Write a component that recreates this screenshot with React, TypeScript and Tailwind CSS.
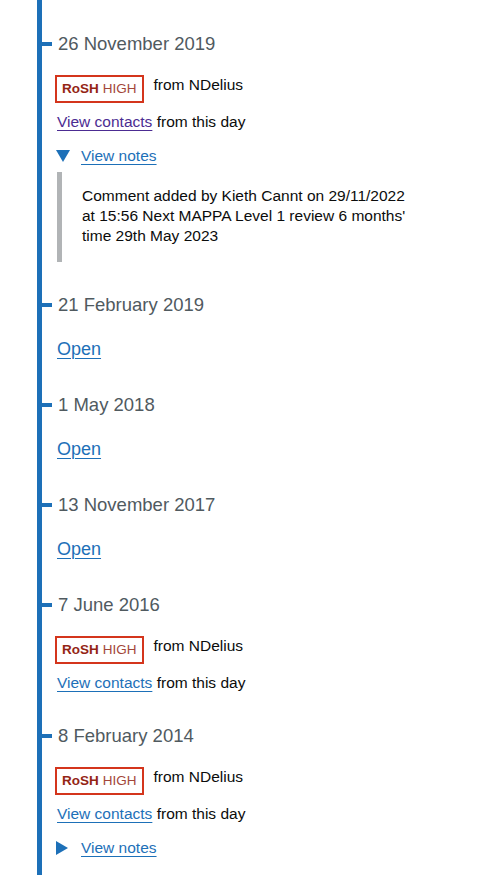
import React from "react";

type Entry = {
  date: string;
  kind: "rosh" | "open";
  visited?: boolean;
  notes?: "open" | "closed";
  noteText?: string;
};

const entries: Entry[] = [
  {
    date: "26 November 2019",
    kind: "rosh",
    visited: true,
    notes: "open",
    noteText:
      "Comment added by Kieth Cannt on 29/11/2022 at 15:56 Next MAPPA Level 1 review 6 months' time 29th May 2023",
  },
  { date: "21 February 2019", kind: "open" },
  { date: "1 May 2018", kind: "open" },
  { date: "13 November 2017", kind: "open" },
  { date: "7 June 2016", kind: "rosh" },
  { date: "8 February 2014", kind: "rosh", notes: "closed" },
];

const font = { fontFamily: '"Liberation Sans", Arial, sans-serif' };

function RoshTag() {
  return (
    <span className="inline-flex h-[28px] items-center border-2 border-[#d4351c] px-[5px] text-[13.5px] leading-none">
      <span className="font-bold text-[#942514]">RoSH</span>
      <span className="ml-[4px] text-[#a3463a]">HIGH</span>
    </span>
  );
}

function Notes({ state, text }: { state: "open" | "closed"; text?: string }) {
  return (
    <div className="mt-[14px]">
      <div className="flex h-[20px] items-center">
        {state === "open" ? (
          <svg width="14" height="12" viewBox="0 0 14 12" className="ml-[1px]">
            <polygon points="0,0 14,0 7,12" fill="#1d70b8" />
          </svg>
        ) : (
          <svg width="12" height="14" viewBox="0 0 12 14" className="ml-[1px]">
            <polygon points="0,0 12,7 0,14" fill="#1d70b8" />
          </svg>
        )}
        <a
          href="#"
          className={`${state === "open" ? "ml-[11px]" : "ml-[13px]"} text-[15.5px] leading-[20px] text-[#1d70b8] underline decoration-1 underline-offset-[3px]`}
        >
          View notes
        </a>
      </div>
      {state === "open" && (
        <div className="mt-[6px] ml-[2px] border-l-[5px] border-[#b1b4b6] pt-[14px] pb-[16px] pl-[20px]">
          <p className="w-[330px] text-[15.5px] leading-[20px] text-[#0b0c0c]">{text}</p>
        </div>
      )}
    </div>
  );
}

function TimelineItem({ entry }: { entry: Entry }) {
  return (
    <div>
      <div className="flex h-[25px] items-center gap-[6px]">
        <span className="h-[4px] w-[10px] bg-[#1d70b8]" />
        <span className="text-[18.5px] leading-[25px] text-[#505a5f]">{entry.date}</span>
      </div>
      {entry.kind === "open" ? (
        <div className="mt-[20px] pl-[15px]">
          <a
            href="#"
            className="text-[18px] leading-[25px] text-[#1d70b8] underline decoration-1 underline-offset-[3px]"
          >
            Open
          </a>
        </div>
      ) : (
        <div className="mt-[19px] pl-[13px]">
          <div className="flex items-start gap-[10px]">
            <RoshTag />
            <span className="text-[15.5px] leading-[20px] text-[#0b0c0c]">from NDelius</span>
          </div>
          <p className="mt-[9px] pl-[2px] text-[15.5px] leading-[20px] text-[#0b0c0c]">
            <a
              href="#"
              className={`${entry.visited ? "text-[#4c2c92]" : "text-[#1d70b8]"} underline decoration-1 underline-offset-[3px]`}
            >
              View contacts
            </a>{" "}
            from this day
          </p>
          {entry.notes && <Notes state={entry.notes} text={entry.noteText} />}
        </div>
      )}
    </div>
  );
}

export default function App() {
  return (
    <div className="min-h-screen bg-white pl-[37px]" style={font}>
      <div className="flex min-h-[875px] flex-col gap-[30px] border-l-[5px] border-[#1d70b8] pt-[31px] pb-[20px]">
        {entries.map((e) => (
          <TimelineItem key={e.date} entry={e} />
        ))}
      </div>
    </div>
  );
}
